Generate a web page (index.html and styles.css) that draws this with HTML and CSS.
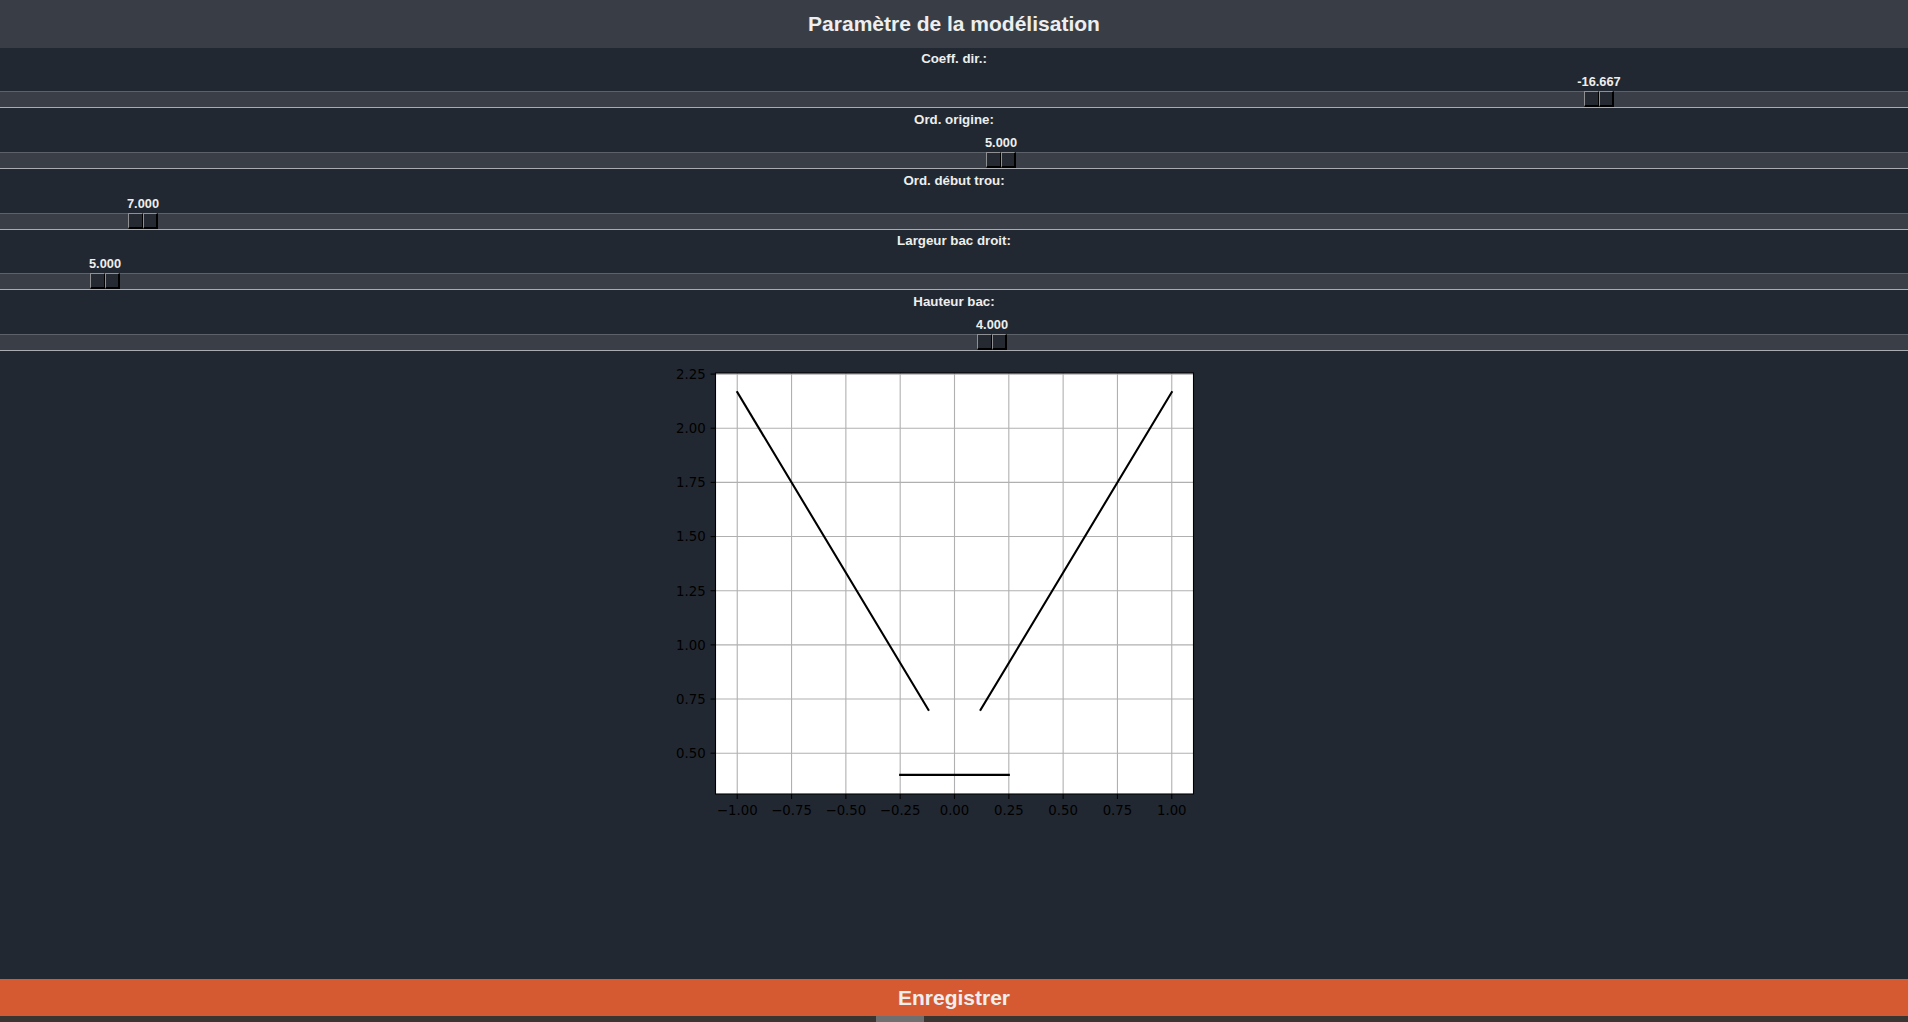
FILE: index.html
```html
<!DOCTYPE html>
<html lang="fr">
<head>
<meta charset="utf-8">
<title>Paramètre de la modélisation</title>
<link rel="stylesheet" href="styles.css">
</head>
<body>
<header class="topbar"><h1 class="title">Paramètre de la modélisation</h1></header>
<main class="params">
  <div class="param">
    <div class="param-label">Coeff. dir.:</div>
    <div class="track"><div class="handle" style="left:1584px"><span class="handle-value">-16.667</span><span class="knob"></span><span class="knob"></span></div></div>
  </div>
  <div class="param">
    <div class="param-label">Ord. origine:</div>
    <div class="track"><div class="handle" style="left:986px"><span class="handle-value">5.000</span><span class="knob"></span><span class="knob"></span></div></div>
  </div>
  <div class="param">
    <div class="param-label">Ord. début trou:</div>
    <div class="track"><div class="handle" style="left:128px"><span class="handle-value">7.000</span><span class="knob"></span><span class="knob"></span></div></div>
  </div>
  <div class="param">
    <div class="param-label">Largeur bac droit:</div>
    <div class="track"><div class="handle" style="left:90px"><span class="handle-value">5.000</span><span class="knob"></span><span class="knob"></span></div></div>
  </div>
  <div class="param">
    <div class="param-label">Hauteur bac:</div>
    <div class="track"><div class="handle" style="left:977px"><span class="handle-value">4.000</span><span class="knob"></span><span class="knob"></span></div></div>
  </div>
</main>
<section class="chart">
  <svg class="plot" width="640" height="470" viewBox="0 0 640 470" xmlns="http://www.w3.org/2000/svg">
    <rect x="81.5" y="17" width="478" height="421" fill="#ffffff"/>
    <g stroke="#b0b0b0" stroke-width="1.1">
      <line x1="103.23" y1="17" x2="103.23" y2="438"/>
      <line x1="157.55" y1="17" x2="157.55" y2="438"/>
      <line x1="211.87" y1="17" x2="211.87" y2="438"/>
      <line x1="266.18" y1="17" x2="266.18" y2="438"/>
      <line x1="320.5" y1="17" x2="320.5" y2="438"/>
      <line x1="374.82" y1="17" x2="374.82" y2="438"/>
      <line x1="429.14" y1="17" x2="429.14" y2="438"/>
      <line x1="483.45" y1="17" x2="483.45" y2="438"/>
      <line x1="537.77" y1="17" x2="537.77" y2="438"/>
      <line x1="81.5" y1="18.08" x2="559.5" y2="18.08"/>
      <line x1="81.5" y1="72.24" x2="559.5" y2="72.24"/>
      <line x1="81.5" y1="126.4" x2="559.5" y2="126.4"/>
      <line x1="81.5" y1="180.56" x2="559.5" y2="180.56"/>
      <line x1="81.5" y1="234.72" x2="559.5" y2="234.72"/>
      <line x1="81.5" y1="288.88" x2="559.5" y2="288.88"/>
      <line x1="81.5" y1="343.04" x2="559.5" y2="343.04"/>
      <line x1="81.5" y1="397.2" x2="559.5" y2="397.2"/>
    </g>
    <g stroke="#000000" stroke-width="2.08" stroke-linecap="square" fill="none">
      <line x1="103.23" y1="36.13" x2="294.43" y2="353.88"/>
      <line x1="346.57" y1="353.88" x2="537.77" y2="36.13"/>
      <line x1="266.18" y1="418.87" x2="374.82" y2="418.87"/>
    </g>
    <rect x="81.5" y="17" width="478" height="421" fill="none" stroke="#000000" stroke-width="1.1"/>
    <g stroke="#000000" stroke-width="1.1">
      <line x1="103.23" y1="438" x2="103.23" y2="442.9"/>
      <line x1="157.55" y1="438" x2="157.55" y2="442.9"/>
      <line x1="211.87" y1="438" x2="211.87" y2="442.9"/>
      <line x1="266.18" y1="438" x2="266.18" y2="442.9"/>
      <line x1="320.5" y1="438" x2="320.5" y2="442.9"/>
      <line x1="374.82" y1="438" x2="374.82" y2="442.9"/>
      <line x1="429.14" y1="438" x2="429.14" y2="442.9"/>
      <line x1="483.45" y1="438" x2="483.45" y2="442.9"/>
      <line x1="537.77" y1="438" x2="537.77" y2="442.9"/>
      <line x1="76.6" y1="18.08" x2="81.5" y2="18.08"/>
      <line x1="76.6" y1="72.24" x2="81.5" y2="72.24"/>
      <line x1="76.6" y1="126.4" x2="81.5" y2="126.4"/>
      <line x1="76.6" y1="180.56" x2="81.5" y2="180.56"/>
      <line x1="76.6" y1="234.72" x2="81.5" y2="234.72"/>
      <line x1="76.6" y1="288.88" x2="81.5" y2="288.88"/>
      <line x1="76.6" y1="343.04" x2="81.5" y2="343.04"/>
      <line x1="76.6" y1="397.2" x2="81.5" y2="397.2"/>
    </g>
    <g class="ticks-x" text-anchor="middle">
      <text x="103.23" y="458.8">−1.00</text>
      <text x="157.55" y="458.8">−0.75</text>
      <text x="211.87" y="458.8">−0.50</text>
      <text x="266.18" y="458.8">−0.25</text>
      <text x="320.5" y="458.8">0.00</text>
      <text x="374.82" y="458.8">0.25</text>
      <text x="429.14" y="458.8">0.50</text>
      <text x="483.45" y="458.8">0.75</text>
      <text x="537.77" y="458.8">1.00</text>
    </g>
    <g class="ticks-y" text-anchor="end">
      <text x="71.6" y="22.9">2.25</text>
      <text x="71.6" y="77.0">2.00</text>
      <text x="71.6" y="131.2">1.75</text>
      <text x="71.6" y="185.4">1.50</text>
      <text x="71.6" y="239.5">1.25</text>
      <text x="71.6" y="293.7">1.00</text>
      <text x="71.6" y="347.8">0.75</text>
      <text x="71.6" y="402.0">0.50</text>
    </g>
  </svg>
</section>
<button class="save" type="button">Enregistrer</button>
<div class="bottom-strip"><span class="strip-thumb"></span></div>
</body>
</html>
```
FILE: styles.css
```css
html, body {
  margin: 0;
  padding: 0;
}
body {
  height: 100vh;
  display: flex;
  flex-direction: column;
  overflow: hidden;
  background: #222831;
  color: #eeeeee;
  font-family: "Liberation Sans", Arial, sans-serif;
}
.topbar {
  flex: 0 0 48px;
  display: flex;
  align-items: center;
  justify-content: center;
  background: #393e46;
}
.title {
  margin: 0;
  font-size: 21px;
  font-weight: 700;
  color: #eeeeee;
}
.params {
  display: flex;
  flex-direction: column;
}
.param {
  height: 60.8px;
  box-sizing: border-box;
  padding-top: 3px;
}
.param-label {
  text-align: center;
  font-size: 13.3px;
  font-weight: 700;
  line-height: 16px;
  color: #eeeeee;
}
.track {
  position: relative;
  margin-top: 24px;
  height: 15px;
  background: #3a3e46;
  border-top: 1px solid #5d616a;
  border-bottom: 1px solid #a9acb1;
}
.handle {
  position: absolute;
  top: -1px;
  display: flex;
  width: 30px;
  height: 16px;
}
.handle-value {
  position: absolute;
  bottom: calc(100% + 1px);
  left: 50%;
  transform: translateX(-50%);
  white-space: nowrap;
  font-size: 12.8px;
  font-weight: 700;
  line-height: 16px;
  color: #eeeeee;
}
.knob {
  flex: 1 1 0;
  box-sizing: border-box;
  background: #252a32;
  border-top: 1px solid #8e9094;
  border-left: 1px solid #8e9094;
  border-right: 1px solid #000000;
  border-bottom: 2px solid #000000;
}
.knob + .knob {
  border-right-width: 2px;
}
.chart {
  flex: 1 1 auto;
  min-height: 0;
  display: flex;
  justify-content: center;
  align-items: flex-start;
  padding-top: 4px;
}
.plot {
  display: block;
}
.plot text {
  font-family: "DejaVu Sans", sans-serif;
  font-size: 13.3px;
  fill: #000000;
}
.save {
  flex: 0 0 37px;
  width: 100%;
  margin: 0;
  padding: 0;
  border: none;
  background: #d65a31;
  color: #eeeeee;
  font-family: "Liberation Sans", Arial, sans-serif;
  font-size: 21px;
  font-weight: 700;
}
.bottom-strip {
  flex: 0 0 6px;
  display: flex;
  background: #3a3531;
}
.strip-thumb {
  margin-left: 876px;
  width: 48px;
  background: #6f6f6f;
}
```
